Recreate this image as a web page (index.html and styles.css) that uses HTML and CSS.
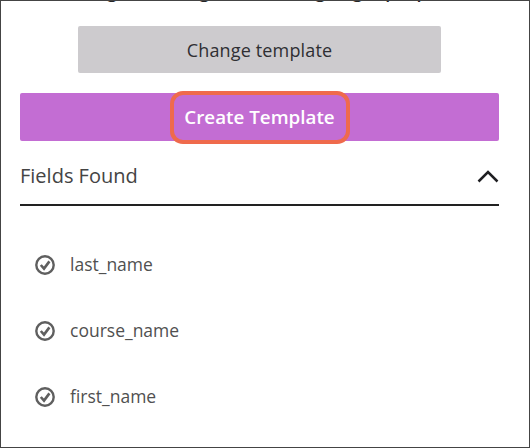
FILE: index.html
```html
<!DOCTYPE html>
<html lang="en">
<head>
  <meta charset="UTF-8">
  <title>Create Template</title>
  <link rel="stylesheet" href="styles.css">
</head>
<body>
  <div class="panel">
    <div class="file-row">
      <span class="file-dot"></span>
      <span class="file-name">graduates grade sheets going top a.pdf</span>
    </div>

    <button class="change-btn">Change template</button>

    <div class="create-btn">
      <span class="create-label">Create Template</span>
    </div>

    <div class="fields-head">
      <span>Fields Found</span>
      <svg class="chevron" width="22" height="14" viewBox="0 0 22 14">
        <path d="M1.5 12.5 L11 3 L20.5 12.5" fill="none" stroke="#1f1f22" stroke-width="2.5"/>
      </svg>
    </div>

    <ul class="field-list">
      <li class="field-item">
        <svg class="check" width="20" height="20" viewBox="0 0 20 20">
          <circle cx="10" cy="10" r="8.7" fill="none" stroke="#5f5f5f" stroke-width="2.4"/>
          <path d="M5.8 10 L9 13.6 L14.4 6.4" fill="none" stroke="#5f5f5f" stroke-width="2.6"/>
        </svg>
        last_name
      </li>
      <li class="field-item">
        <svg class="check" width="20" height="20" viewBox="0 0 20 20">
          <circle cx="10" cy="10" r="8.7" fill="none" stroke="#5f5f5f" stroke-width="2.4"/>
          <path d="M5.8 10 L9 13.6 L14.4 6.4" fill="none" stroke="#5f5f5f" stroke-width="2.6"/>
        </svg>
        course_name
      </li>
      <li class="field-item">
        <svg class="check" width="20" height="20" viewBox="0 0 20 20">
          <circle cx="10" cy="10" r="8.7" fill="none" stroke="#5f5f5f" stroke-width="2.4"/>
          <path d="M5.8 10 L9 13.6 L14.4 6.4" fill="none" stroke="#5f5f5f" stroke-width="2.6"/>
        </svg>
        first_name
      </li>
    </ul>
  </div>
</body>
</html>
```

FILE: styles.css
```css
html, body {
  margin: 0;
  padding: 0;
}

body {
  font-family: "Open Sans", sans-serif;
  background-color: #fff;
}

.panel {
  box-sizing: border-box;
  width: 530px;
  height: 448px;
  border: 1px solid #444;
  padding: 0 30px 0 19px;
  overflow: hidden;
}

.file-row {
  display: flex;
  align-items: center;
  gap: 14px;
  height: 26px;
  margin-top: -23px;
  margin-bottom: 22px;
  padding-left: 61px;
  font-size: 18px;
  font-weight: 600;
  color: #262626;
}

.file-dot {
  width: 12px;
  height: 12px;
  border-radius: 50%;
  background-color: #2e8b3d;
}

.change-btn {
  display: block;
  width: 363px;
  height: 47px;
  margin: 0 0 20px 58px;
  border: none;
  border-radius: 2px;
  background-color: #cdcbce;
  color: #2f2f33;
  font-family: inherit;
  font-size: 18px;
  font-weight: 500;
  letter-spacing: 0.15px;
}

.create-btn {
  display: flex;
  justify-content: center;
  align-items: center;
  height: 48px;
  border-radius: 2px;
  background-color: #c36dd3;
}

.create-label {
  box-sizing: border-box;
  display: flex;
  align-items: center;
  justify-content: center;
  width: 180px;
  height: 53px;
  border: 4px solid #ef6a4c;
  border-radius: 13px;
  color: #fff;
  font-size: 18.8px;
  font-weight: 600;
}

.fields-head {
  box-sizing: border-box;
  display: flex;
  justify-content: space-between;
  align-items: center;
  height: 65px;
  padding-top: 6px;
  border-bottom: 2px solid #222;
  color: #444;
  font-size: 20px;
}

.field-list {
  list-style: none;
  margin: 25px 0 0;
  padding: 0;
}

.field-item {
  display: flex;
  align-items: center;
  gap: 15px;
  height: 66px;
  padding-left: 15px;
  color: #505050;
  font-size: 17.5px;
}

.check {
  flex: none;
  margin-top: 2px;
}
```
